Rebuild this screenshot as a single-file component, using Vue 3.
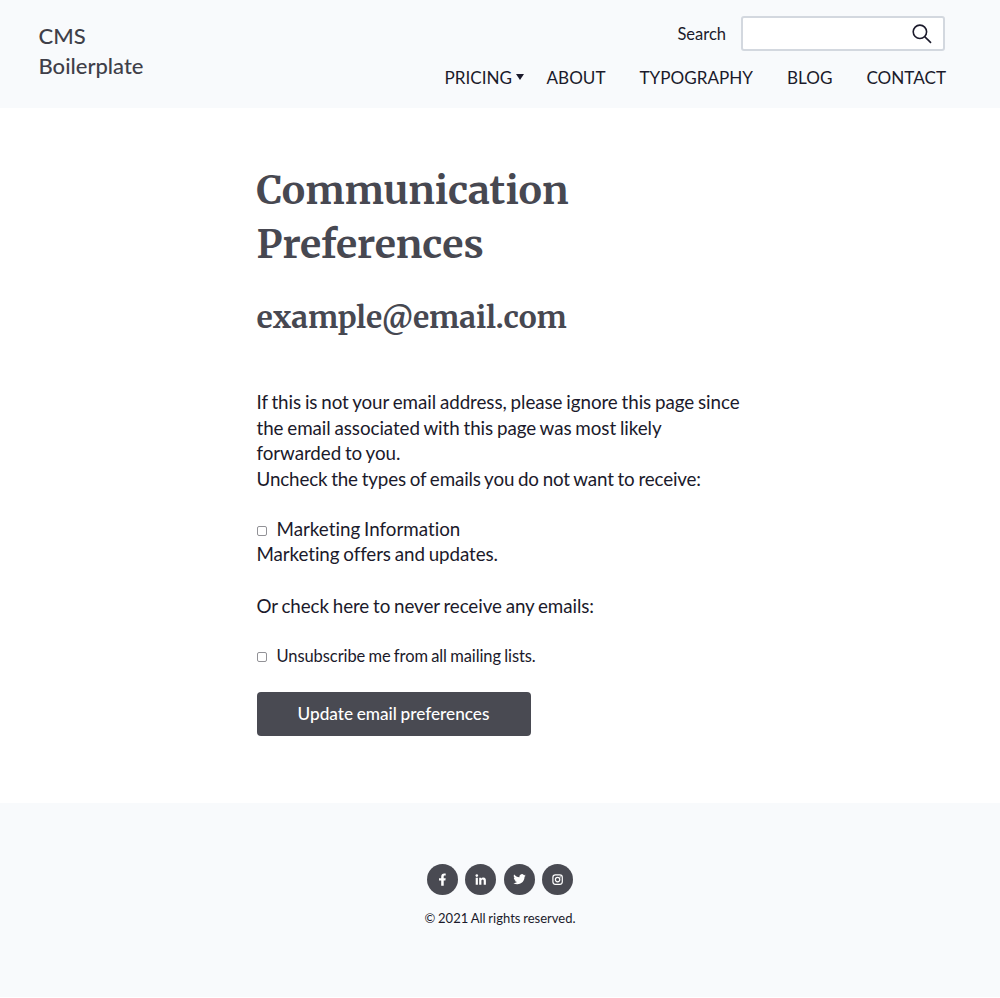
<script setup>
const links = ['About', 'Typography', 'Blog', 'Contact']
</script>

<template>
  <div class="page">
    <header class="header">
      <div class="logo">CMS<br />Boilerplate</div>
      <div class="header-right">
        <form class="search" @submit.prevent>
          <label for="q">Search</label>
          <div class="search-box">
            <input id="q" type="text" />
            <svg width="20" height="20" viewBox="0 0 20 20" fill="none" stroke="#1b1a2b" stroke-width="1.6">
              <circle cx="7.9" cy="7.8" r="6.7" />
              <path d="M12.7 12.6 19 18.9" />
            </svg>
          </div>
        </form>
        <nav class="nav">
          <a class="pricing">Pricing<i class="caret"></i></a>
          <a v-for="l in links" :key="l" :class="l.toLowerCase()">{{ l }}</a>
        </nav>
      </div>
    </header>

    <main class="main">
      <h1>Communication Preferences</h1>
      <h2>example@email.com</h2>
      <p class="intro">If this is not your email address, please ignore this page since<br />the email associated with this page was most likely<br />forwarded to you.</p>
      <p class="uncheck">Uncheck the types of emails you do not want to receive:</p>
      <label class="option"><input type="checkbox" /><span>Marketing Information</span></label>
      <p class="offers">Marketing offers and updates.</p>
      <p class="or">Or check here to never receive any emails:</p>
      <label class="option small"><input type="checkbox" /><span>Unsubscribe me from all mailing lists.</span></label>
      <button type="button">Update email preferences</button>
    </main>

    <footer class="footer">
      <div class="social">
        <a aria-label="Facebook">
          <svg viewBox="0 0 31 31"><path d="M14.2 21.8v-5.3h-2.2v-2.3h2.2v-1.5c0-2.2 1.2-3.3 3-3.3.8 0 1.5.1 1.5.1v2h-.9c-.9 0-1.1.5-1.1 1.1v1.6h2l-.3 2.3h-1.7v5.3z" /></svg>
        </a>
        <a aria-label="LinkedIn">
          <svg viewBox="0 0 31 31"><circle cx="11.8" cy="11.6" r="1.3" /><path d="M10.7 13.7h2.2v7h-2.2zM14.2 13.7h2.1v1c.4-.7 1.1-1.2 2.1-1.2 2 0 2.5 1.3 2.5 3.2v4h-2.2v-3.5c0-1-.1-1.8-1.1-1.8s-1.2.8-1.2 1.7v3.6h-2.2z" /></svg>
        </a>
        <a aria-label="Twitter">
          <svg viewBox="0 0 31 31"><path transform="translate(9.3 9) scale(.52)" d="M23.9 4.6a10 10 0 0 1-2.8.8 4.9 4.9 0 0 0 2.2-2.7c-1 .6-2 1-3.1 1.2a4.9 4.9 0 0 0-8.4 4.5C7.7 8.1 4.1 6.1 1.6 3.1a4.8 4.8 0 0 0-.7 2.5c0 1.7.9 3.2 2.2 4.1a4.9 4.9 0 0 1-2.2-.6v.1a4.9 4.9 0 0 0 3.9 4.8 5 5 0 0 1-2.2.1 4.9 4.9 0 0 0 4.6 3.4A9.9 9.9 0 0 1 0 19.5a14 14 0 0 0 7.6 2.2c9 0 14-7.5 14-14v-.6a10 10 0 0 0 2.3-2.5z" /></svg>
        </a>
        <a aria-label="Instagram">
          <svg viewBox="0 0 31 31"><rect x="10.9" y="10.9" width="9.4" height="9.4" rx="2.5" class="line" /><circle cx="15.6" cy="15.6" r="2.2" class="line" /><circle cx="18.2" cy="12.9" r=".6" /></svg>
        </a>
      </div>
      <div class="copy">© 2021 All rights reserved.</div>
    </footer>
  </div>
</template>

<style>
body { background: #fff; }
</style>

<style scoped>
* { box-sizing: border-box; }
.page { height: 998px; display: flex; flex-direction: column; font-family: Lato, sans-serif; font-variant-ligatures: none; color: #1b1a2b; }
.header { height: 108px; flex: none; display: flex; justify-content: space-between; background: #f8fafc; padding: 16px 54px 0 38.5px; }
.logo { padding-top: 5px; font-size: 22px; line-height: 30px; font-weight: 500; color: #3f3f49; }
.header-right { display: flex; flex-direction: column; align-items: flex-end; }
.search { display: flex; align-items: center; padding-right: 1px; font-size: 16.5px; }
.search-box { display: flex; align-items: center; width: 204px; height: 35px; margin-left: 15px; padding-right: 11px; background: #fff; border: 2px solid #d3d8df; border-radius: 3px; }
.search-box input { flex: 1; min-width: 0; border: 0; outline: 0; background: none; }
.nav { display: flex; margin-top: 16px; font-size: 17.1px; line-height: 22px; text-transform: uppercase; white-space: nowrap; }
.pricing { display: flex; align-items: center; margin-right: 22.5px; }
.caret { margin: -3px 0 0 4px; border: 4px solid transparent; border-top: 6px solid #1b1a2b; border-bottom: 0; }
.about, .typography, .blog { margin-right: 34px; }
.main { flex: none; height: 695px; width: 486px; margin-left: 256.5px; padding-top: 55px; font-size: 18.8px; line-height: 25.4px; word-spacing: -0.9px; white-space: nowrap; }
h1, h2 { margin: 0; font-family: Merriweather, "Noto Serif", "DejaVu Serif Condensed", serif; font-weight: 700; color: #474851; }
h1 { font-size: 39.2px; line-height: 54px; white-space: normal; }
h2 { margin-top: 25px; font-size: 30px; line-height: 42px; }
p { margin: 0; }
.intro { margin-top: 51.3px; letter-spacing: -0.06px; }
.uncheck { letter-spacing: -0.14px; }
.option { display: flex; align-items: center; margin-top: 25px; }
.option input { appearance: none; width: 10px; height: 10px; margin: 4px 10px 0 0; border: 1px solid #929297; border-radius: 2px; background: #fff; }
.offers { letter-spacing: -0.08px; }
.or { margin-top: 26.4px; letter-spacing: -0.08px; }
.option.small { margin-top: 25px; font-size: 16.5px; letter-spacing: -0.08px; }
.option.small input { margin-top: 2px; }
button { display: block; width: 274px; height: 44px; margin-top: 23px; padding: 0; border: 0; border-radius: 4px; background: #494a52; color: #fff; font: 500 17.2px Lato, sans-serif; word-spacing: -0.7px; }
.footer { flex: none; height: 194px; padding-top: 61px; background: #f8fafc; text-align: center; }
.social { display: flex; justify-content: center; gap: 7.5px; }
.social a { width: 31px; height: 31px; border-radius: 50%; background: #494a52; }
.social svg { display: block; fill: #fff; }
.social .line { fill: none; stroke: #fff; stroke-width: 1.2; }
.copy { margin-top: 14px; font-size: 13px; line-height: 18px; word-spacing: -0.5px; }
</style>
